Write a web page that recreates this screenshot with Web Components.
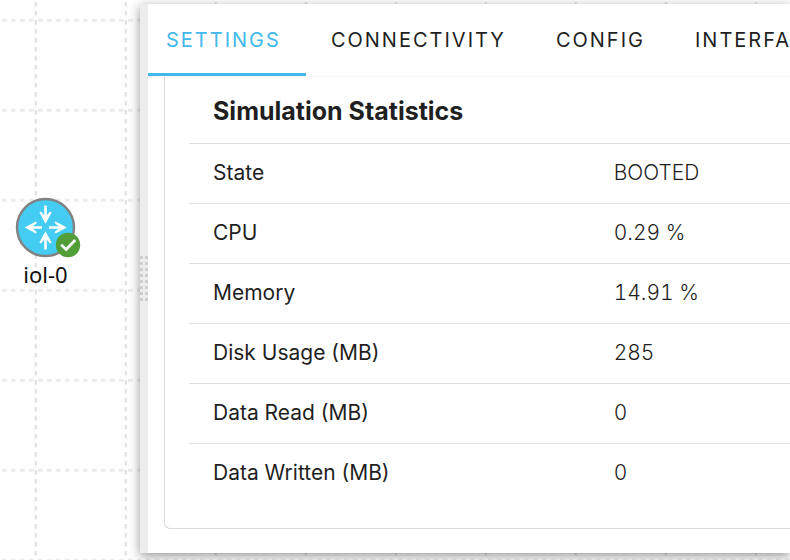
<!DOCTYPE html>
<html lang="en">
<head>
<meta charset="utf-8">
<title>iol-0 - Node details</title>
<style>
  html, body {
    height: 100%;
  }
  body {
    margin: 0;
    overflow: hidden;
    color: #1f1f1f;
    font-family: Inter, "Liberation Sans", sans-serif;
    font-size: 20px;
    line-height: 28px;
  }
</style>
</head>
<body>
<topology-canvas>
  <router-node>iol-0</router-node>
  <detail-panel slot="panel">
    <tab-bar slot="tabs" active="Settings" tabs="Settings,Connectivity,Config,Interfaces"></tab-bar>
    <stat-table heading="Simulation Statistics">
      <stat-row label="State" value="BOOTED"></stat-row>
      <stat-row label="CPU" value="0.29 %"></stat-row>
      <stat-row label="Memory" value="14.91 %"></stat-row>
      <stat-row label="Disk Usage (MB)" value="285"></stat-row>
      <stat-row label="Data Read (MB)" value="0"></stat-row>
      <stat-row label="Data Written (MB)" value="0"></stat-row>
    </stat-table>
  </detail-panel>
</topology-canvas>

<script>
// Workbench canvas with its dashed grid
class TopologyCanvas extends HTMLElement {
  constructor() {
    super();
    this.attachShadow({ mode: 'open' });
  }

  connectedCallback() {
    this.shadowRoot.innerHTML = `
      <style>
        :host {
          display: flex;
          position: relative;
          height: 100%;
          background: #fefefe;
          overflow: hidden;
        }
        .grid {
          position: absolute;
          inset: 0;
          width: 100%;
          height: 100%;
        }
        .nodes {
          position: relative;
          flex: 0 0 140px;
        }
        .panel {
          position: relative;
          flex: 1;
          min-width: 0;
          display: flex;
          padding: 4px 0 7px;
        }
      </style>
      <svg class="grid" aria-hidden="true">
        <defs>
          <pattern id="cell" width="90" height="90" x="34" y="18" patternUnits="userSpaceOnUse">
            <path d="M4 2.2h86" stroke="#ececec" stroke-width="3" stroke-dasharray="4.6 4.4"/>
            <path d="M1.8 2v88" stroke="#dfdfdf" stroke-width="2" stroke-dasharray="4.4 4.6"/>
          </pattern>
        </defs>
        <rect width="100%" height="100%" fill="url(#cell)"/>
      </svg>
      <div class="nodes"><slot></slot></div>
      <div class="panel"><slot name="panel"></slot></div>
    `;
  }
}

// Router on the canvas, with its status badge
class RouterNode extends HTMLElement {
  constructor() {
    super();
    this.attachShadow({ mode: 'open' });
  }

  connectedCallback() {
    this.shadowRoot.innerHTML = `
      <style>
        :host {
          position: absolute;
          left: 10px;
          top: 197px;
          width: 71px;
          display: flex;
          flex-direction: column;
          align-items: center;
          color: #111;
          font-family: "Noto Sans", sans-serif;
          font-size: 22px;
          line-height: 30px;
        }
        svg {
          display: block;
        }
      </style>
      <svg width="71" height="62" viewBox="10 197 71 62" aria-hidden="true">
        <circle cx="45.5" cy="227.5" r="28.5" fill="#44ccf3" stroke="#828282" stroke-width="2.4"/>
        <g fill="none" stroke="#fff" stroke-width="2.6">
          <path d="M45.5 205.5v14M45.5 249.5v-14M49 227.5h12M30 227.5h12"/>
        </g>
        <g fill="#fff">
          <path d="M45.5 223.8l-6.1-11.3q.6-1.4 2.2-.4l3.9 5.2 3.9-5.2q1.6-1 2.2.4z"/>
          <path d="M45.5 231.2l-6.1 11.3q.6 1.4 2.2.4l3.9-5.2 3.9 5.2q1.6 1 2.2-.4z"/>
          <path d="M24.6 227.5l11.3-6.1q1.4.6.4 2.2l-5.2 3.9 5.2 3.9q1 1.6-.4 2.2z"/>
          <path d="M66.8 227.5l-11.3-6.1q-1.4.6-.4 2.2l5.2 3.9-5.2 3.9q-1 1.6.4 2.2z"/>
        </g>
        <circle cx="68" cy="245" r="12.2" fill="#519e38"/>
        <path d="M61.2 244.7l5 4.8 9-9.5" fill="none" stroke="#f4f4f4" stroke-width="2.8"/>
      </svg>
      <slot></slot>
    `;
  }
}

// Drawer with a resize handle on its left edge
class DetailPanel extends HTMLElement {
  constructor() {
    super();
    this.attachShadow({ mode: 'open' });
  }

  connectedCallback() {
    this.shadowRoot.innerHTML = `
      <style>
        :host {
          flex: 1;
          min-width: 0;
          display: flex;
          background: #fff;
          box-shadow: 0 3px 10px rgba(0, 0, 0, 0.4);
        }
        .handle {
          flex: 0 0 8px;
          display: flex;
          align-items: center;
          background: #ededed;
        }
        .grip {
          width: 100%;
          height: 45px;
          background:
            linear-gradient(90deg, transparent 3px, #ededed 3px 5px, transparent 5px),
            repeating-linear-gradient(#cfcfcf 0 3px, #ededed 3px 6px);
        }
        .content {
          flex: 1;
          min-width: 0;
          display: flex;
          flex-direction: column;
        }
        .body {
          flex: 1;
          min-height: 0;
          display: flex;
          padding: 0 0 24px 16px;
        }
      </style>
      <div class="handle"><div class="grip"></div></div>
      <div class="content">
        <slot name="tabs"></slot>
        <div class="body"><slot></slot></div>
      </div>
    `;
  }
}

class TabBar extends HTMLElement {
  constructor() {
    super();
    this.attachShadow({ mode: 'open' });
  }

  get active() {
    return this.getAttribute('active');
  }

  connectedCallback() {
    this.render();
    this.shadowRoot.addEventListener('click', (e) => {
      const tab = e.target.closest('button');
      if (!tab) return;
      this.setAttribute('active', tab.dataset.name);
      this.render();
    });
  }

  render() {
    const tabs = this.getAttribute('tabs').split(',').map((name) => `
      <button type="button" role="tab" data-name="${name}" aria-selected="${name === this.active}">${name.toUpperCase()}</button>
    `).join('');

    this.shadowRoot.innerHTML = `
      <style>
        :host {
          display: block;
          overflow: hidden;
          border-bottom: 1px solid #f7f7f7;
        }
        [role="tablist"] {
          display: flex;
        }
        button {
          flex: none;
          height: 72px;
          padding: 3px 25px 0;
          border: 0;
          border-bottom: 3px solid transparent;
          background: none;
          color: inherit;
          font: inherit;
          letter-spacing: 2px;
          cursor: pointer;
        }
        button:first-child {
          padding-left: 18px;
        }
        button[aria-selected="true"] {
          border-bottom-color: #41b9eb;
          color: #41b9eb;
        }
      </style>
      <div role="tablist">${tabs}</div>
    `;
  }
}

// Holds the label and value of one statistic
class StatRow extends HTMLElement {
  get label() {
    return this.getAttribute('label');
  }

  get value() {
    return this.getAttribute('value');
  }
}

class StatTable extends HTMLElement {
  constructor() {
    super();
    this.attachShadow({ mode: 'open' });
  }

  connectedCallback() {
    const rows = [...this.querySelectorAll('stat-row')].map((row) => `
      <tr>
        <th scope="row">${row.label}</th>
        <td>${row.value}</td>
      </tr>
    `).join('');

    this.shadowRoot.innerHTML = `
      <style>
        :host {
          flex: 1;
          min-width: 0;
          border: 1px solid #dcdcdc;
          border-width: 0 0 1px 1px;
          border-radius: 0 0 0 6px;
          padding-left: 24px;
        }
        table {
          width: 100%;
          table-layout: fixed;
          border-collapse: collapse;
          font-size: 21px;
          text-align: left;
        }
        caption {
          padding: 19px 24px 17px;
          font-size: 25px;
          line-height: 30px;
          font-weight: 700;
          text-align: left;
        }
        th, td {
          height: 57px;
          padding: 0 24px 2px;
          border-top: 1px solid #dfdfdf;
        }
        th {
          width: calc(200% / 3);
          box-sizing: border-box;
          font-weight: 400;
        }
        td {
          font-weight: 300;
          font-variant-numeric: tabular-nums;
        }
      </style>
      <table>
        <caption>${this.getAttribute('heading')}</caption>
        <tbody>${rows}</tbody>
      </table>
    `;
  }
}

customElements.define('stat-row', StatRow);
customElements.define('stat-table', StatTable);
customElements.define('tab-bar', TabBar);
customElements.define('detail-panel', DetailPanel);
customElements.define('router-node', RouterNode);
customElements.define('topology-canvas', TopologyCanvas);
</script>
</body>
</html>
